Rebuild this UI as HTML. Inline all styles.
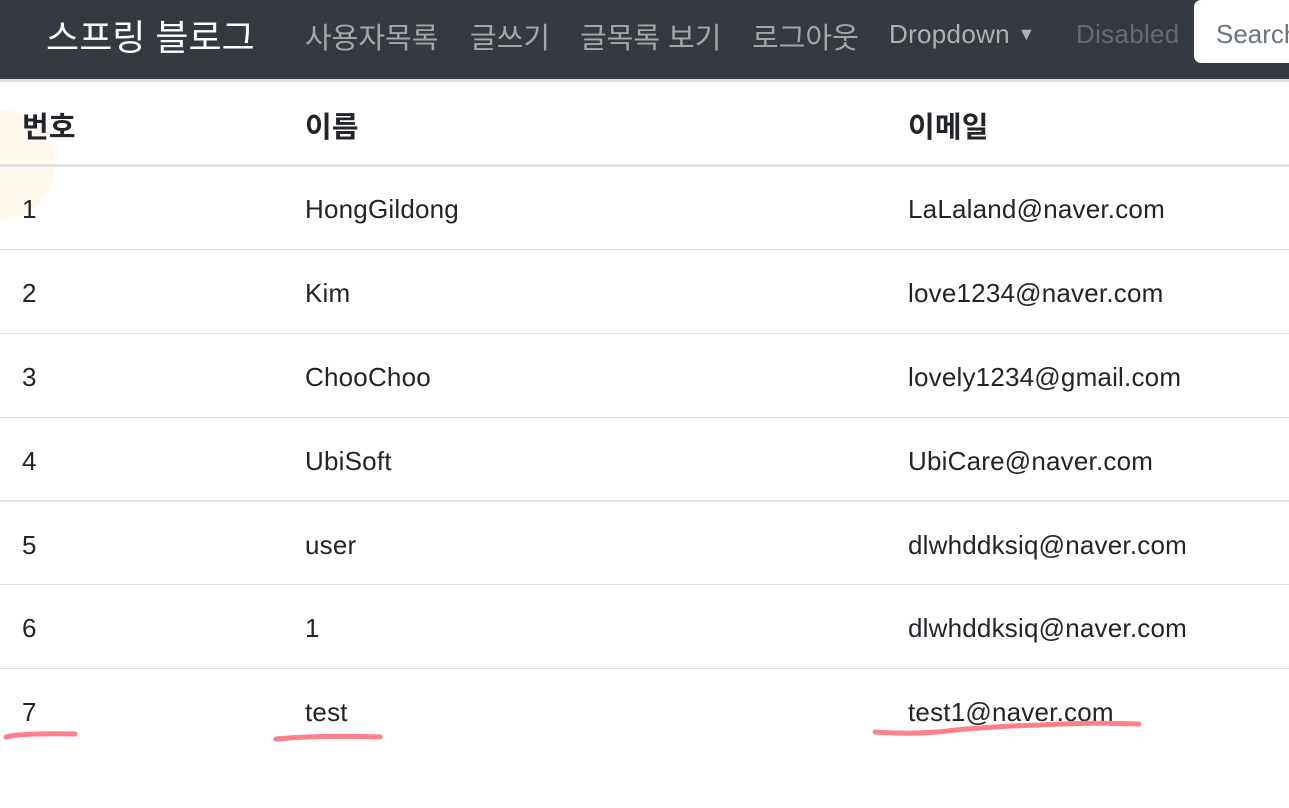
<!DOCTYPE html>
<html><head><meta charset="utf-8"><style>
body{margin:0;width:1289px;height:808px;overflow:hidden;background:#fff;font-family:"Liberation Sans","Noto Sans CJK KR",sans-serif;color:#212529;position:relative}
.nav{position:absolute;left:0;top:0;width:1289px;height:79px;background:#343a40;border-bottom:3px solid #dee2e6}
.nav span{position:absolute;top:15px;font-size:29px;color:rgba(255,255,255,.55);white-space:nowrap}
.nav span.en{font-size:26px;top:19px;letter-spacing:0.3px}
.brand{left:46px;font-size:36px!important;top:9px!important;color:#fff!important}
.search{position:absolute;left:1194px;top:0;width:120px;height:63px;background:#fff;border-radius:7px;font-size:26px;color:#6c757d;box-sizing:border-box;padding:19px 22px;}
.row{position:absolute;left:0;width:1289px;height:84px;border-top:1px solid #dee2e6}
.row div{position:absolute;top:28px;font-size:26px;white-space:nowrap;letter-spacing:0.2px}
.c1{left:22px}.c2{left:305px}.c3{left:908px}
.h div{font-weight:bold;font-size:29px!important}
</style></head><body>
<div class="nav">
<span class="brand">스프링 블로그</span>
<span style="left:305px">사용자목록</span>
<span style="left:470px">글쓰기</span>
<span style="left:580px">글목록 보기</span>
<span style="left:752px">로그아웃</span>
<span class="en" style="left:889px;color:rgba(255,255,255,.6)">Dropdown <small style="font-size:18px;position:relative;top:-3px">▼</small></span>
<span class="en" style="left:1076px;color:rgba(255,255,255,.25)">Disabled</span>
</div>
<div class="search">Search</div>
<div style="position:absolute;left:-50px;top:110px;width:105px;height:110px;border-radius:50%;background:#fff8ee"></div>
<div class="row h" style="top:82px;border-top:none;height:82px;border-bottom:3px solid #dee2e6"><div class="c1" style="top:22px">번호</div><div class="c2" style="top:22px">이름</div><div class="c3" style="top:22px">이메일</div></div>
<div class="row" style="top:166px;border-top:none"><div class="c1">1</div><div class="c2">HongGildong</div><div class="c3">LaLaland@naver.com</div></div>
<div class="row" style="top:249px"><div class="c1">2</div><div class="c2">Kim</div><div class="c3">love1234@naver.com</div></div>
<div class="row" style="top:333px"><div class="c1">3</div><div class="c2">ChooChoo</div><div class="c3">lovely1234@gmail.com</div></div>
<div class="row" style="top:417px"><div class="c1">4</div><div class="c2">UbiSoft</div><div class="c3">UbiCare@naver.com</div></div>
<div class="row" style="top:500px;border-top:2px solid #dee2e6"><div class="c1">5</div><div class="c2">user</div><div class="c3">dlwhddksiq@naver.com</div></div>
<div class="row" style="top:584px"><div class="c1">6</div><div class="c2">1</div><div class="c3">dlwhddksiq@naver.com</div></div>
<div class="row" style="top:668px"><div class="c1">7</div><div class="c2">test</div><div class="c3">test1@naver.com</div></div>
<svg style="position:absolute;left:0;top:0" width="1289" height="808"><g stroke="#ff7f8a" stroke-width="5" fill="none" stroke-linecap="round">
<path d="M6 737 Q20 733 75 734"/><path d="M276 739 Q320 735 380 737"/><path d="M875 732 Q920 735 955 730 Q1000 726 1040 725 Q1090 722 1139 724"/></g></svg>
</body></html>
